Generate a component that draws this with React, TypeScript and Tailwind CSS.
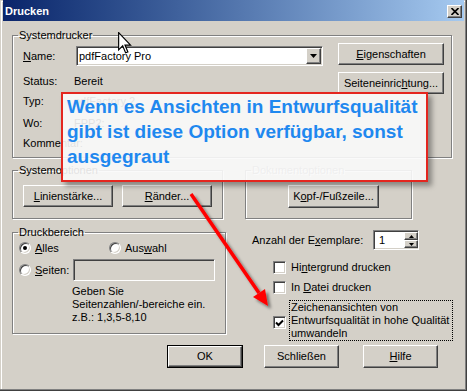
import React from "react";

const raised =
  "bg-[#d4d0c8] border border-t-white border-l-white border-r-[#404040] border-b-[#404040] shadow-[inset_-1px_-1px_0_#808080,inset_1px_1px_0_#d4d0c8]";
const sunken =
  "border border-t-[#808080] border-l-[#808080] border-r-white border-b-white shadow-[inset_1px_1px_0_#404040,inset_-1px_-1px_0_#d4d0c8]";
const etched = "border border-[#808080] shadow-[inset_1px_1px_0_#fff,1px_1px_0_#fff]";

function Btn({ children, className = "" }: { children: React.ReactNode; className?: string }) {
  return <div className={`${raised} flex items-center justify-center ${className}`}>{children}</div>;
}

function Group({
  title,
  className = "",
  disabled,
  children,
}: {
  title: string;
  className?: string;
  disabled?: boolean;
  children?: React.ReactNode;
}) {
  return (
    <fieldset className={`${etched} ${className}`}>
      <legend
        className={`ml-[5px] px-[1px] leading-[13px] ${
          disabled ? "text-[#808080] [text-shadow:1px_1px_0_#fff]" : ""
        }`}
      >
        {title}
      </legend>
      {children}
    </fieldset>
  );
}

function Radio({ checked }: { checked?: boolean }) {
  return (
    <span
      className={`w-[12px] h-[12px] rounded-full bg-white flex items-center justify-center border border-t-[#808080] border-l-[#808080] border-r-white border-b-white shadow-[inset_1px_1px_0_#404040,inset_-1px_-1px_0_#d4d0c8]`}
    >
      {checked && <span className="w-[4px] h-[4px] rounded-full bg-black" />}
    </span>
  );
}

function Check({ checked }: { checked?: boolean }) {
  return (
    <span className={`${sunken} bg-white w-[13px] h-[13px] flex items-center justify-center shrink-0`}>
      {checked && (
        <svg width="9" height="8" viewBox="0 0 9 8">
          <path d="M1 3.5 L3.5 6 L8 1.5" fill="none" stroke="#000" strokeWidth="2" />
        </svg>
      )}
    </span>
  );
}

export default function App() {
  return (
    <div className="relative w-[467px] h-[391px] bg-[#d4d0c8] overflow-hidden font-['Liberation_Sans',Arial,sans-serif] text-[11px] leading-[13px] text-black shadow-[inset_-1px_-1px_0_#404040,inset_-2px_-2px_0_#808080,inset_1px_1px_0_#d4d0c8,inset_2px_2px_0_#fff]">
      {/* Title bar */}
      <div className="mx-[3px] h-[21px] flex items-start bg-linear-to-r from-[#0a246a] to-[#a6caf0]">
        <span className="ml-[2px] mt-[5px] font-bold text-white">Drucken</span>
        <div className={`${raised} ml-auto mr-[2px] mt-[5px] w-[15px] h-[13px] flex items-center justify-center`}>
          <svg width="8" height="7" viewBox="0 0 8 7">
            <path d="M0.5 0 L7.5 7 M7.5 0 L0.5 7" stroke="#000" strokeWidth="1.6" />
          </svg>
        </div>
      </div>

      <div className="px-[12px]">
        {/* Systemdrucker */}
        <Group title="Systemdrucker" className="mt-[8px] w-[440px] h-[129px]">
          <div className="flex pl-[10px]">
            <div className="flex flex-col">
              <div className="mt-[4px] h-[20px] flex items-center">
                <span className="w-[53px]">
                  <u>N</u>ame:
                </span>
                <div className={`${sunken} bg-white w-[247px] h-[20px] flex items-center`}>
                  <span className="pl-[2px]">pdfFactory Pro</span>
                  <div className={`${raised} ml-auto mr-[1px] w-[15px] h-[16px] flex items-center justify-center`}>
                    <svg width="7" height="4" viewBox="0 0 7 4">
                      <path d="M0 0 H7 L3.5 4 Z" fill="#000" />
                    </svg>
                  </div>
                </div>
              </div>
              <div className="mt-[9px] flex">
                <span className="w-[51px]">Status:</span>
                <span>Bereit</span>
              </div>
              <div className="mt-[7px] flex">
                <span className="w-[51px]">Typ:</span>
                <span>pdfFactory 2</span>
              </div>
              <div className="mt-[9px] flex">
                <span className="w-[51px]">Wo:</span>
                <span>FPP2:</span>
              </div>
              <div className="mt-[7px] flex">
                <span className="w-[51px]">Kommentar:</span>
              </div>
            </div>
            <div className="ml-[15px] flex flex-col">
              <Btn className="mt-[1px] w-[106px] h-[22px]">
                <span>
                  <u>E</u>igenschaften
                </span>
              </Btn>
              <Btn className="mt-[7px] w-[106px] h-[22px]">
                <span>
                  Seiteneinric<u>h</u>tung...
                </span>
              </Btn>
            </div>
          </div>
        </Group>

        {/* Options row */}
        <div className="mt-[6px] flex items-start">
          <Group title="Systemoptionen" className="w-[211px] h-[55px]">
            <div className="flex pl-[10px] pt-[8px] gap-[9px]">
              <Btn className="w-[90px] h-[22px]">
                <span>
                  <u>L</u>inienstärke...
                </span>
              </Btn>
              <Btn className="w-[90px] h-[22px]">
                <span>
                  <u>R</u>änder...
                </span>
              </Btn>
            </div>
          </Group>
          <Group title="Dokumentoptionen" disabled className="ml-[22px] w-[167px] h-[55px]">
            <div className="flex pl-[42px] pt-[8px]">
              <Btn className="w-[91px] h-[23px]">
                <span>
                  K<u>o</u>pf-/Fußzeile...
                </span>
              </Btn>
            </div>
          </Group>
        </div>

        {/* Range + copies */}
        <div className="mt-[7px] flex items-start">
          <Group title="Druckbereich" className="w-[214px] h-[108px]">
            <div className="flex flex-col pl-[6px] pt-[3px]">
              <div className="h-[12px] flex items-center">
                <div className="w-[90px] flex items-center">
                  <Radio checked />
                  <span className="ml-[4px]">
                    <u>A</u>lles
                  </span>
                </div>
                <Radio />
                <span className="ml-[4px]">
                  Aus<u>w</u>ahl
                </span>
              </div>
              <div className="mt-[5px] h-[22px] flex items-center">
                <Radio />
                <span className="ml-[4px] w-[38px]">
                  <u>S</u>eiten:
                </span>
                <div className={`${sunken} bg-[#d4d0c8] w-[142px] h-[22px]`} />
              </div>
              <div className="mt-[4px] ml-[53px]">
                Geben Sie
                <br />
                Seitenzahlen/-bereiche ein.
                <br />
                z.B.: 1,3,5-8,10
              </div>
            </div>
          </Group>

          <div className="ml-[26px] flex flex-col">
            <div className="mt-[4px] h-[20px] flex items-center">
              <span className="w-[121px]">
                Anzahl der E<u>x</u>emplare:
              </span>
              <div className={`${sunken} bg-white w-[46px] h-[20px] flex items-center`}>
                <span className="pl-[5px]">1</span>
                <div className="ml-auto flex flex-col">
                  <div className={`${raised} w-[14px] h-[8px] flex items-center justify-center`}>
                    <svg width="5" height="3" viewBox="0 0 5 3">
                      <path d="M0 3 H5 L2.5 0 Z" fill="#000" />
                    </svg>
                  </div>
                  <div className={`${raised} w-[14px] h-[8px] flex items-center justify-center`}>
                    <svg width="5" height="3" viewBox="0 0 5 3">
                      <path d="M0 0 H5 L2.5 3 Z" fill="#000" />
                    </svg>
                  </div>
                </div>
              </div>
            </div>
            <div className="pl-[21px] flex flex-col">
              <div className="mt-[10px] flex items-center">
                <Check />
                <span className="ml-[3px] border border-transparent px-[1px]">
                  Hi<u>n</u>tergrund drucken
                </span>
              </div>
              <div className="mt-[5px] flex items-center">
                <Check />
                <span className="ml-[3px] border border-transparent px-[1px]">
                  In <u>D</u>atei drucken
                </span>
              </div>
              <div className="mt-[5px] flex items-start">
                <span className="mt-[16px]">
                  <Check checked />
                </span>
                <span className="ml-[3px] w-[164px] border border-dotted border-black px-[1px]">
                  Zeichenansichten von
                  <br />
                  Entwurfsqualität in hohe Qualität
                  <br />
                  umwandeln
                </span>
              </div>
            </div>
          </div>
        </div>

        {/* Bottom buttons */}
        <div className="mt-[4px] flex">
          <div className="ml-[155px] border border-black">
            <Btn className="w-[74px] h-[21px]">OK</Btn>
          </div>
          <Btn className="ml-[21px] w-[75px] h-[23px]">Schließen</Btn>
          <Btn className="ml-[24px] w-[75px] h-[23px]">
            <span>
              <u>H</u>ilfe
            </span>
          </Btn>
        </div>
      </div>

      {/* Callout overlay */}
      <div className="absolute left-[61px] top-[92px] w-[367px] h-[90px] bg-[#fafaf9]/90 border-2 border-[#e4261f] shadow-[4px_4px_5px_rgba(0,0,0,0.35)] pl-[4px] font-bold text-[19px] leading-[25px] text-[#1f88ef]">
        Wenn es Ansichten in Entwurfsqualität
        <br />
        gibt ist diese Option verfügbar, sonst
        <br />
        ausgegraut
      </div>

      {/* Red arrow */}
      <svg className="absolute left-0 top-0 pointer-events-none" width="467" height="391">
        <defs>
          <filter id="sh" x="-20%" y="-20%" width="140%" height="140%">
            <feDropShadow dx="3" dy="3" stdDeviation="1.5" floodColor="#000" floodOpacity="0.45" />
          </filter>
        </defs>
        <g filter="url(#sh)">
          <line x1="191" y1="194" x2="259" y2="293" stroke="#ff0000" strokeWidth="3.5" />
          <polygon points="268,306 253,297 265,289" fill="#ff0000" />
        </g>
      </svg>

      {/* Mouse cursor */}
      <svg className="absolute left-[118px] top-[32px] pointer-events-none" width="14" height="22" viewBox="0 0 12 19">
        <path
          d="M0.5 0.5 L0.5 15.5 L4 12 L6.5 18 L8.5 17.2 L6 11.3 L10.8 11.3 Z"
          fill="#fff"
          stroke="#000"
          strokeWidth="1"
          strokeLinejoin="miter"
        />
      </svg>
    </div>
  );
}
